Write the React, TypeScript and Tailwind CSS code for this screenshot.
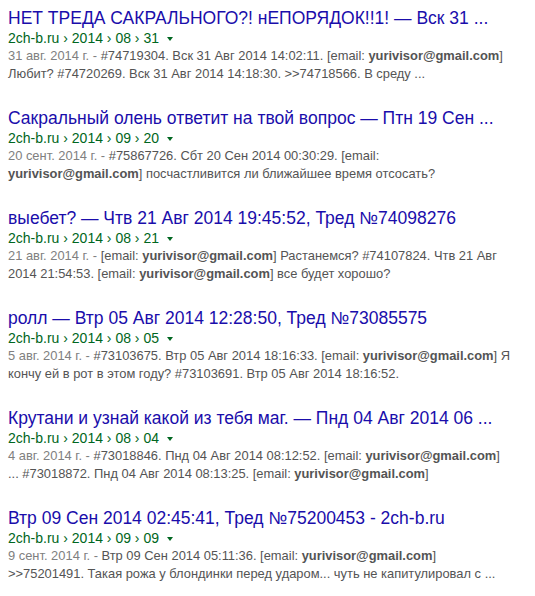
import React from "react"

type Part = { t: string; b?: boolean }

type Result = {
    title: string
    path: string[]
    date: string
    lines: Part[][]
}

const EMAIL = "yurivisor@gmail.com"

const results: Result[] = [
    {
        title: "НЕТ ТРЕДА САКРАЛЬНОГО?! нЕПОРЯДОК!!1! — Вск 31 ...",
        path: ["2014", "08", "31"],
        date: "31 авг. 2014 г. - ",
        lines: [
            [{ t: "#74719304. Вск 31 Авг 2014 14:02:11. [email: " }, { t: EMAIL, b: true }, { t: "]" }],
            [{ t: "Любит? #74720269. Вск 31 Авг 2014 14:18:30. >>74718566. В среду ..." }],
        ],
    },
    {
        title: "Сакральный олень ответит на твой вопрос — Птн 19 Сен ...",
        path: ["2014", "09", "20"],
        date: "20 сент. 2014 г. - ",
        lines: [
            [{ t: "#75867726. Сбт 20 Сен 2014 00:30:29. [email:" }],
            [{ t: EMAIL, b: true }, { t: "] посчастливится ли ближайшее время отсосать?" }],
        ],
    },
    {
        title: "выебет? — Чтв 21 Авг 2014 19:45:52, Тред №74098276",
        path: ["2014", "08", "21"],
        date: "21 авг. 2014 г. - ",
        lines: [
            [{ t: "[email: " }, { t: EMAIL, b: true }, { t: "] Растанемся? #74107824. Чтв 21 Авг" }],
            [{ t: "2014 21:54:53. [email: " }, { t: EMAIL, b: true }, { t: "] все будет хорошо?" }],
        ],
    },
    {
        title: "ролл — Втр 05 Авг 2014 12:28:50, Тред №73085575",
        path: ["2014", "08", "05"],
        date: "5 авг. 2014 г. - ",
        lines: [
            [{ t: "#73103675. Втр 05 Авг 2014 18:16:33. [email: " }, { t: EMAIL, b: true }, { t: "] Я" }],
            [{ t: "кончу ей в рот в этом году? #73103691. Втр 05 Авг 2014 18:16:52." }],
        ],
    },
    {
        title: "Крутани и узнай какой из тебя маг. — Пнд 04 Авг 2014 06 ...",
        path: ["2014", "08", "04"],
        date: "4 авг. 2014 г. - ",
        lines: [
            [{ t: "#73018846. Пнд 04 Авг 2014 08:12:52. [email: " }, { t: EMAIL, b: true }, { t: "]" }],
            [{ t: "... #73018872. Пнд 04 Авг 2014 08:13:25. [email: " }, { t: EMAIL, b: true }, { t: "]" }],
        ],
    },
    {
        title: "Втр 09 Сен 2014 02:45:41, Тред №75200453 - 2ch-b.ru",
        path: ["2014", "09", "09"],
        date: "9 сент. 2014 г. - ",
        lines: [
            [{ t: "Втр 09 Сен 2014 05:11:36. [email: " }, { t: EMAIL, b: true }, { t: "]" }],
            [{ t: ">>75201491. Такая рожа у блондинки перед ударом... чуть не капитулировал с ..." }],
        ],
    },
]

export default function App() {
    return (
        <div className="min-h-[596px] w-[535px] bg-white pt-2 pl-2 font-['Liberation_Sans',Arial,sans-serif]">
            {results.map((r, i) => (
                <div key={i} className="mb-[25px]">
                    <h3 className="whitespace-nowrap text-[17.5px] leading-[21px] text-[#1a0dab]">{r.title}</h3>
                    <div className="flex items-center whitespace-nowrap text-[14px] leading-[18px] text-[#006621]">
                        <span>2ch-b.ru › {r.path.join(" › ")}</span>
                        {/* dropdown arrow */}
                        <span className="ml-[8px] mt-[1px] inline-block h-0 w-0 border-x-[3px] border-t-[4px] border-x-transparent border-t-[#006621]"></span>
                    </div>
                    <div className="text-[12.9px] leading-[18px] text-[#545454]">
                        {r.lines.map((line, j) => (
                            <div key={j} className="whitespace-nowrap">
                                {j === 0 && <span className="text-[#808080]">{r.date}</span>}
                                {line.map((p, k) =>
                                    p.b ? (
                                        <b key={k} className="font-bold text-[#545454]">{p.t}</b>
                                    ) : (
                                        <span key={k}>{p.t}</span>
                                    )
                                )}
                            </div>
                        ))}
                    </div>
                </div>
            ))}
        </div>
    )
}
